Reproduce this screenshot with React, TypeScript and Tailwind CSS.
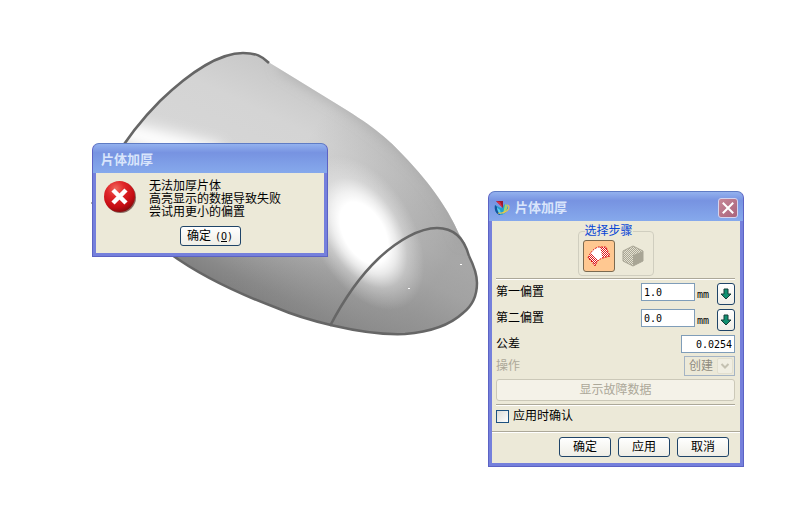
import React, { useState } from 'react';

interface WindowProps {
  title: string;
  icon?: React.ReactNode;
  closable?: boolean;
  children: React.ReactNode;
}

const DialogWindow: React.FC<WindowProps> = ({ title, icon, closable, children }) => (
  <section
    aria-label={title}
    className="rounded-t-[7px] border border-[#5c63c4] border-t-[#5f7cc4] bg-[#7580dc] overflow-hidden"
  >
    <header className="flex h-[29px] items-center gap-[5px] bg-gradient-to-b from-[#93b1ee] via-[#7793e1] via-30% to-[#86a9ec] px-[5px] pt-[2px]">
      {icon}
      <h1 className={`flex-1 text-[13px] leading-4 font-bold text-[#d9e5fb] ${icon ? '' : 'pl-[3px]'}`}>{title}</h1>
      {closable && (
        <button
          type="button"
          aria-label="关闭"
          className="flex h-5 w-5 items-center justify-center rounded-[3px] border border-[#d5d3ee] bg-gradient-to-br from-[#c68797] to-[#a9637c]"
        >
          <svg viewBox="0 0 12 12" className="h-3 w-3" stroke="#fff" strokeWidth="2" strokeLinecap="square">
            <path d="M1.5 1.5l9 9M10.5 1.5l-9 9" />
          </svg>
        </button>
      )}
    </header>
    <div className="mx-[3px] mb-[3px] bg-[#ece9d8]">{children}</div>
  </section>
);

const AppIcon = () => (
  <svg viewBox="0 0 16 16" className="h-4 w-4 shrink-0">
    <path d="M1 5c-1 5 1 9 5 10 4 0 7-3 8-7l-3-4-4 4z" fill="#1f9fd0" />
    <path d="M1 5c-1 5 1 9 5 10L5 9z" fill="#17539c" />
    <path d="M3 7l3 3 1 4C4 13 3 10 3 7z" fill="#5ad0ee" />
    <path d="M11 4l2 1c1 3-1 7-4 9z" fill="#9fd474" />
    <path d="M2 1l7 0 0 7z" fill="#9a1a30" />
    <path d="M2 1l4 1 3 6z" fill="#dc3046" />
    <path d="M4 13c4 1 11-2 11-6 0-1-1-2-2-2" fill="none" stroke="#f0c64a" strokeWidth="1.2" />
  </svg>
);

const ErrorIcon = () => (
  <svg viewBox="0 0 34 34" className="h-[34px] w-[34px] shrink-0">
    <defs>
      <radialGradient id="errorRed" cx="0.38" cy="0.25" r="0.8">
        <stop offset="0" stopColor="#f0695c" />
        <stop offset="0.35" stopColor="#e0272a" />
        <stop offset="0.75" stopColor="#c40c12" />
        <stop offset="1" stopColor="#7d0a0c" />
      </radialGradient>
    </defs>
    <circle cx="16.5" cy="17.5" r="15.5" fill="#6f4a44" opacity="0.8" />
    <circle cx="15.5" cy="16.5" r="15.5" fill="url(#errorRed)" />
    <path d="M9 10l13 13M22 10l-13 13" stroke="#fff" strokeWidth="4.5" />
  </svg>
);

const SheetIcon = () => (
  <svg viewBox="0 0 24 24" className="h-6 w-6">
    <defs>
      <pattern id="redDots" width="2" height="2" patternUnits="userSpaceOnUse">
        <rect width="2" height="2" fill="#fff" />
        <rect width="1" height="1" fill="#e01818" />
        <rect x="1" y="1" width="1" height="1" fill="#e01818" />
      </pattern>
    </defs>
    <path d="M1 14C3 9 6 5 11 3h8c1 2 2 5 4 9l-7 2c-4 1-6 3-8 8l-3-4z" fill="#fff" />
    <path d="M1 14l3-5c2 2 3 4 7 7l-3 6-3-4z" fill="url(#redDots)" />
    <path d="M13 3h6c1 2 2 5 4 9l-8 2c0-4-1-7-2-11z" fill="url(#redDots)" />
    <path
      d="M1 14C3 9 6 5 11 3h8c1 2 2 5 4 9l-7 2c-4 1-6 3-8 8l-3-4z"
      fill="none"
      stroke="#dd1515"
      strokeDasharray="2 1"
    />
  </svg>
);

const SolidIcon = () => (
  <svg viewBox="0 0 24 24" className="h-6 w-6">
    <defs>
      <pattern id="grayDots" width="2" height="2" patternUnits="userSpaceOnUse">
        <rect width="2" height="2" fill="#e4e1d0" />
        <rect width="1" height="1" fill="#a8a595" />
        <rect x="1" y="1" width="1" height="1" fill="#a8a595" />
      </pattern>
    </defs>
    <path d="M2 7l10-5 10 5-10 4z" fill="url(#grayDots)" />
    <path d="M2 7l10 4v11L2 17z" fill="url(#grayDots)" />
    <path d="M12 11l10-4v10l-10 5z" fill="#a8a595" />
    <path d="M2 7l10-5 10 5v10l-10 5-10-5z" fill="none" stroke="#a8a595" />
  </svg>
);

const ModelView = () => (
  <svg
    viewBox="88 48 396 292"
    className="absolute left-[88px] top-[48px] h-[292px] w-[396px]"
    role="img"
    aria-label="片体模型"
  >
    <defs>
      <clipPath id="body">
        <path d="M112 163C128 136 144 117 160 101C190 72 220 53 243 53C256 53 262 56 270 63L340 106C376 128 389 140 403 155C433 186 450 213 459 234C465 242 467 248 469 256C473 264 477 274 477 283C477 297 472 306 463 313C450 325 430 332 405 334C360 336 300 318 277 308C226 289 190 270 160 246Z" />
      </clipPath>
      <linearGradient id="shade" gradientUnits="userSpaceOnUse" x1="330" y1="90" x2="225" y2="310">
        <stop offset="0" stopColor="#c8c8c8" />
        <stop offset="0.2" stopColor="#d4d4d4" />
        <stop offset="0.42" stopColor="#d6d6d6" />
        <stop offset="0.54" stopColor="#cacaca" />
        <stop offset="0.68" stopColor="#a8a8a8" />
        <stop offset="0.85" stopColor="#888" />
        <stop offset="1" stopColor="#747474" />
      </linearGradient>
      <linearGradient id="falloff" gradientUnits="userSpaceOnUse" x1="300" y1="150" x2="455" y2="250">
        <stop offset="0" stopColor="#8a8a8a" stopOpacity="0" />
        <stop offset="1" stopColor="#8a8a8a" stopOpacity="0.62" />
      </linearGradient>
      <radialGradient id="glow">
        <stop offset="0" stopColor="#fff" />
        <stop offset="0.4" stopColor="#fff" />
        <stop offset="0.54" stopColor="#fff" stopOpacity="0.75" />
        <stop offset="0.72" stopColor="#fff" stopOpacity="0.3" />
        <stop offset="1" stopColor="#fff" stopOpacity="0" />
      </radialGradient>
      <filter id="soft" filterUnits="userSpaceOnUse" x="60" y="20" width="450" height="350">
        <feGaussianBlur stdDeviation="7" />
      </filter>
    </defs>
    <g clipPath="url(#body)">
      <rect x="88" y="48" width="396" height="292" fill="url(#shade)" />
      <rect x="88" y="48" width="396" height="292" fill="url(#falloff)" />
      <path d="M280 64L344 103C382 126 414 155 436 182C450 202 460 220 466 240" fill="none" stroke="#a0a0a0" strokeWidth="7" filter="url(#soft)" />
      <path d="M110 128L220 156" stroke="#fff" strokeWidth="22" filter="url(#soft)" />
      <ellipse cx="364" cy="233" rx="50" ry="84" transform="rotate(-30 364 233)" fill="url(#glow)" />
    </g>
    <g fill="none" stroke="#666" strokeWidth="2.5">
      <path d="M112 163C128 136 144 117 160 101C190 72 220 53 243 53C256 53 262 56 269 63" />
      <path d="M160 246C190 270 226 289 277 308C300 318 360 336 405 334C430 332 450 325 463 313C472 306 477 297 477 283C477 274 473 264 469 256" />
      <path d="M330 326C342 303 358 278 378 259C398 240 420 228 437 228C453 228 464 238 469 256" />
    </g>
    <path d="M91 203h2" stroke="#555" />
    <path d="M408 288.500h2M460 264.500h2" stroke="#fff" />
  </svg>
);

const Divider = () => <div className="h-[2px] border-t border-[#aca899] bg-white" />;

const buttonClass =
  'h-5 rounded-[3px] border border-[#1f4468] bg-gradient-to-b from-white to-[#efeee6] text-xs leading-4 text-black';

interface OffsetRowProps {
  id: string;
  label: string;
  value: string;
  onChange: (value: string) => void;
}

const OffsetRow: React.FC<OffsetRowProps> = ({ id, label, value, onChange }) => (
  <div className="flex h-[26px] items-start">
    <label htmlFor={id} className="flex-1 leading-[18px]">{label}</label>
    <input
      id={id}
      value={value}
      onChange={(e) => onChange(e.target.value)}
      className="h-[18px] w-[54px] border border-[#7f9db9] bg-white px-[2px] font-['DejaVu_Sans_Mono',monospace] text-[10px] leading-4"
    />
    <span className="w-[22px] pl-[2px] pt-1 font-['DejaVu_Sans_Mono',monospace] text-[10px] leading-4">mm</span>
    <button
      type="button"
      aria-label={`${label}选项`}
      className="flex h-[22px] w-[18px] items-center justify-center rounded-[3px] border border-[#1f4468] bg-gradient-to-b from-white to-[#efeee6]"
    >
      <svg viewBox="0 0 12 12" className="h-3 w-3 shrink-0">
        <path d="M4 1h4v5h3L6 11L1 6h3z" fill="#109070" stroke="#173c38" />
      </svg>
    </button>
  </div>
);

export default function App() {
  const [firstOffset, setFirstOffset] = useState('1.0');
  const [secondOffset, setSecondOffset] = useState('0.0');
  const [tolerance, setTolerance] = useState('0.0254');
  const [confirmOnApply, setConfirmOnApply] = useState(false);

  return (
    <main className="relative min-h-screen overflow-hidden bg-white font-['Liberation_Sans','Noto_Sans_CJK_SC',sans-serif] text-xs text-black">
      <ModelView />

      {/* Error message */}
      <div className="absolute left-[92px] top-[143px] w-[236px]">
        <DialogWindow title="片体加厚">
          <div className="flex flex-col px-2 pt-[7px] pb-[7px]">
            <div className="flex items-start gap-[11px]">
              <ErrorIcon />
              <p className="leading-[13px]">
                无法加厚片体
                <br />
                高亮显示的数据导致失败
                <br />
                尝试用更小的偏置
              </p>
            </div>
            <button type="button" className={`${buttonClass} mt-[7px] w-[61px] self-center`}>
              确定<span className="ml-1 font-['DejaVu_Sans_Mono',monospace] text-[10px]">(<u>O</u>)</span>
            </button>
          </div>
        </DialogWindow>
      </div>

      {/* Thicken sheet settings */}
      <div className="absolute left-[488px] top-[191px] w-64">
        <DialogWindow title="片体加厚" icon={<AppIcon />} closable>
          <div className="pt-px pr-[5px] pl-1">
            <fieldset className="mx-auto w-[76px] rounded-[4px] border border-[#d0cebf] px-1 pb-[3px]">
              <legend className="ml-[2px] leading-[18px] text-[#0a46d5]">选择步骤</legend>
              <div className="flex gap-[2px]">
                <button
                  type="button"
                  aria-label="片体"
                  aria-pressed="true"
                  className="flex h-8 w-8 items-center justify-center rounded-[3px] border border-[#7a6a50] bg-[#ffc891]"
                >
                  <SheetIcon />
                </button>
                <button type="button" aria-label="实体" disabled className="flex h-8 w-8 items-center justify-center">
                  <SolidIcon />
                </button>
              </div>
            </fieldset>

            <div className="mt-[2px] mb-[3px]">
              <Divider />
            </div>

            <OffsetRow id="first-offset" label="第一偏置" value={firstOffset} onChange={setFirstOffset} />
            <OffsetRow id="second-offset" label="第二偏置" value={secondOffset} onChange={setSecondOffset} />

            <div className="flex h-[21px] items-start justify-between">
              <label htmlFor="tolerance" className="leading-[18px]">公差</label>
              <input
                id="tolerance"
                value={tolerance}
                onChange={(e) => setTolerance(e.target.value)}
                className="h-[18px] w-[54px] border border-[#7f9db9] bg-white px-[2px] text-right font-['DejaVu_Sans_Mono',monospace] text-[10px] leading-4"
              />
            </div>

            <div className="flex h-[23px] items-start justify-between text-[#aca899]">
              <label htmlFor="operation" className="leading-5">操作</label>
              <div className="relative">
                <select
                  id="operation"
                  disabled
                  className="block h-5 w-[51px] appearance-none border border-[#a5b4c4] bg-[#ece9d8] pl-1 text-xs leading-4 text-[#8f8c7f] opacity-100"
                >
                  <option>创建</option>
                </select>
                <span className="pointer-events-none absolute right-[2px] top-[2px] flex h-4 w-4 items-center justify-center rounded-[2px] border border-[#e2dfcf] bg-[#f0eee2]">
                  <svg viewBox="0 0 10 8" className="h-2 w-[10px]" fill="none" stroke="#c4c1b1" strokeWidth="2">
                    <path d="M1.500 2L5 5.500L8.500 2" />
                  </svg>
                </span>
              </div>
            </div>

            <button
              type="button"
              disabled
              className="block h-[22px] w-full rounded-[3px] border border-[#cbc8b8] bg-[#f4f2e8] text-xs leading-4 text-[#aca899]"
            >
              显示故障数据
            </button>

            <div className="mt-[3px]">
              <Divider />
            </div>

            <div className="flex items-center gap-1 pt-[2px] pb-[7px]">
              <input
                id="confirm-apply"
                type="checkbox"
                checked={confirmOnApply}
                onChange={(e) => setConfirmOnApply(e.target.checked)}
                className="h-[13px] w-[13px] appearance-none border border-[#1c5180] bg-gradient-to-br from-[#dcdcd7] to-white checked:bg-[#21a121]"
              />
              <label htmlFor="confirm-apply" className="leading-4">应用时确认</label>
            </div>
          </div>

          <Divider />

          <div className="flex justify-end gap-[7px] pt-1 pr-[11px] pb-[6px]">
            <button type="button" className={`${buttonClass} w-[52px]`}>确定</button>
            <button type="button" className={`${buttonClass} w-[52px]`}>应用</button>
            <button type="button" className={`${buttonClass} w-[52px]`}>取消</button>
          </div>
        </DialogWindow>
      </div>
    </main>
  );
}
